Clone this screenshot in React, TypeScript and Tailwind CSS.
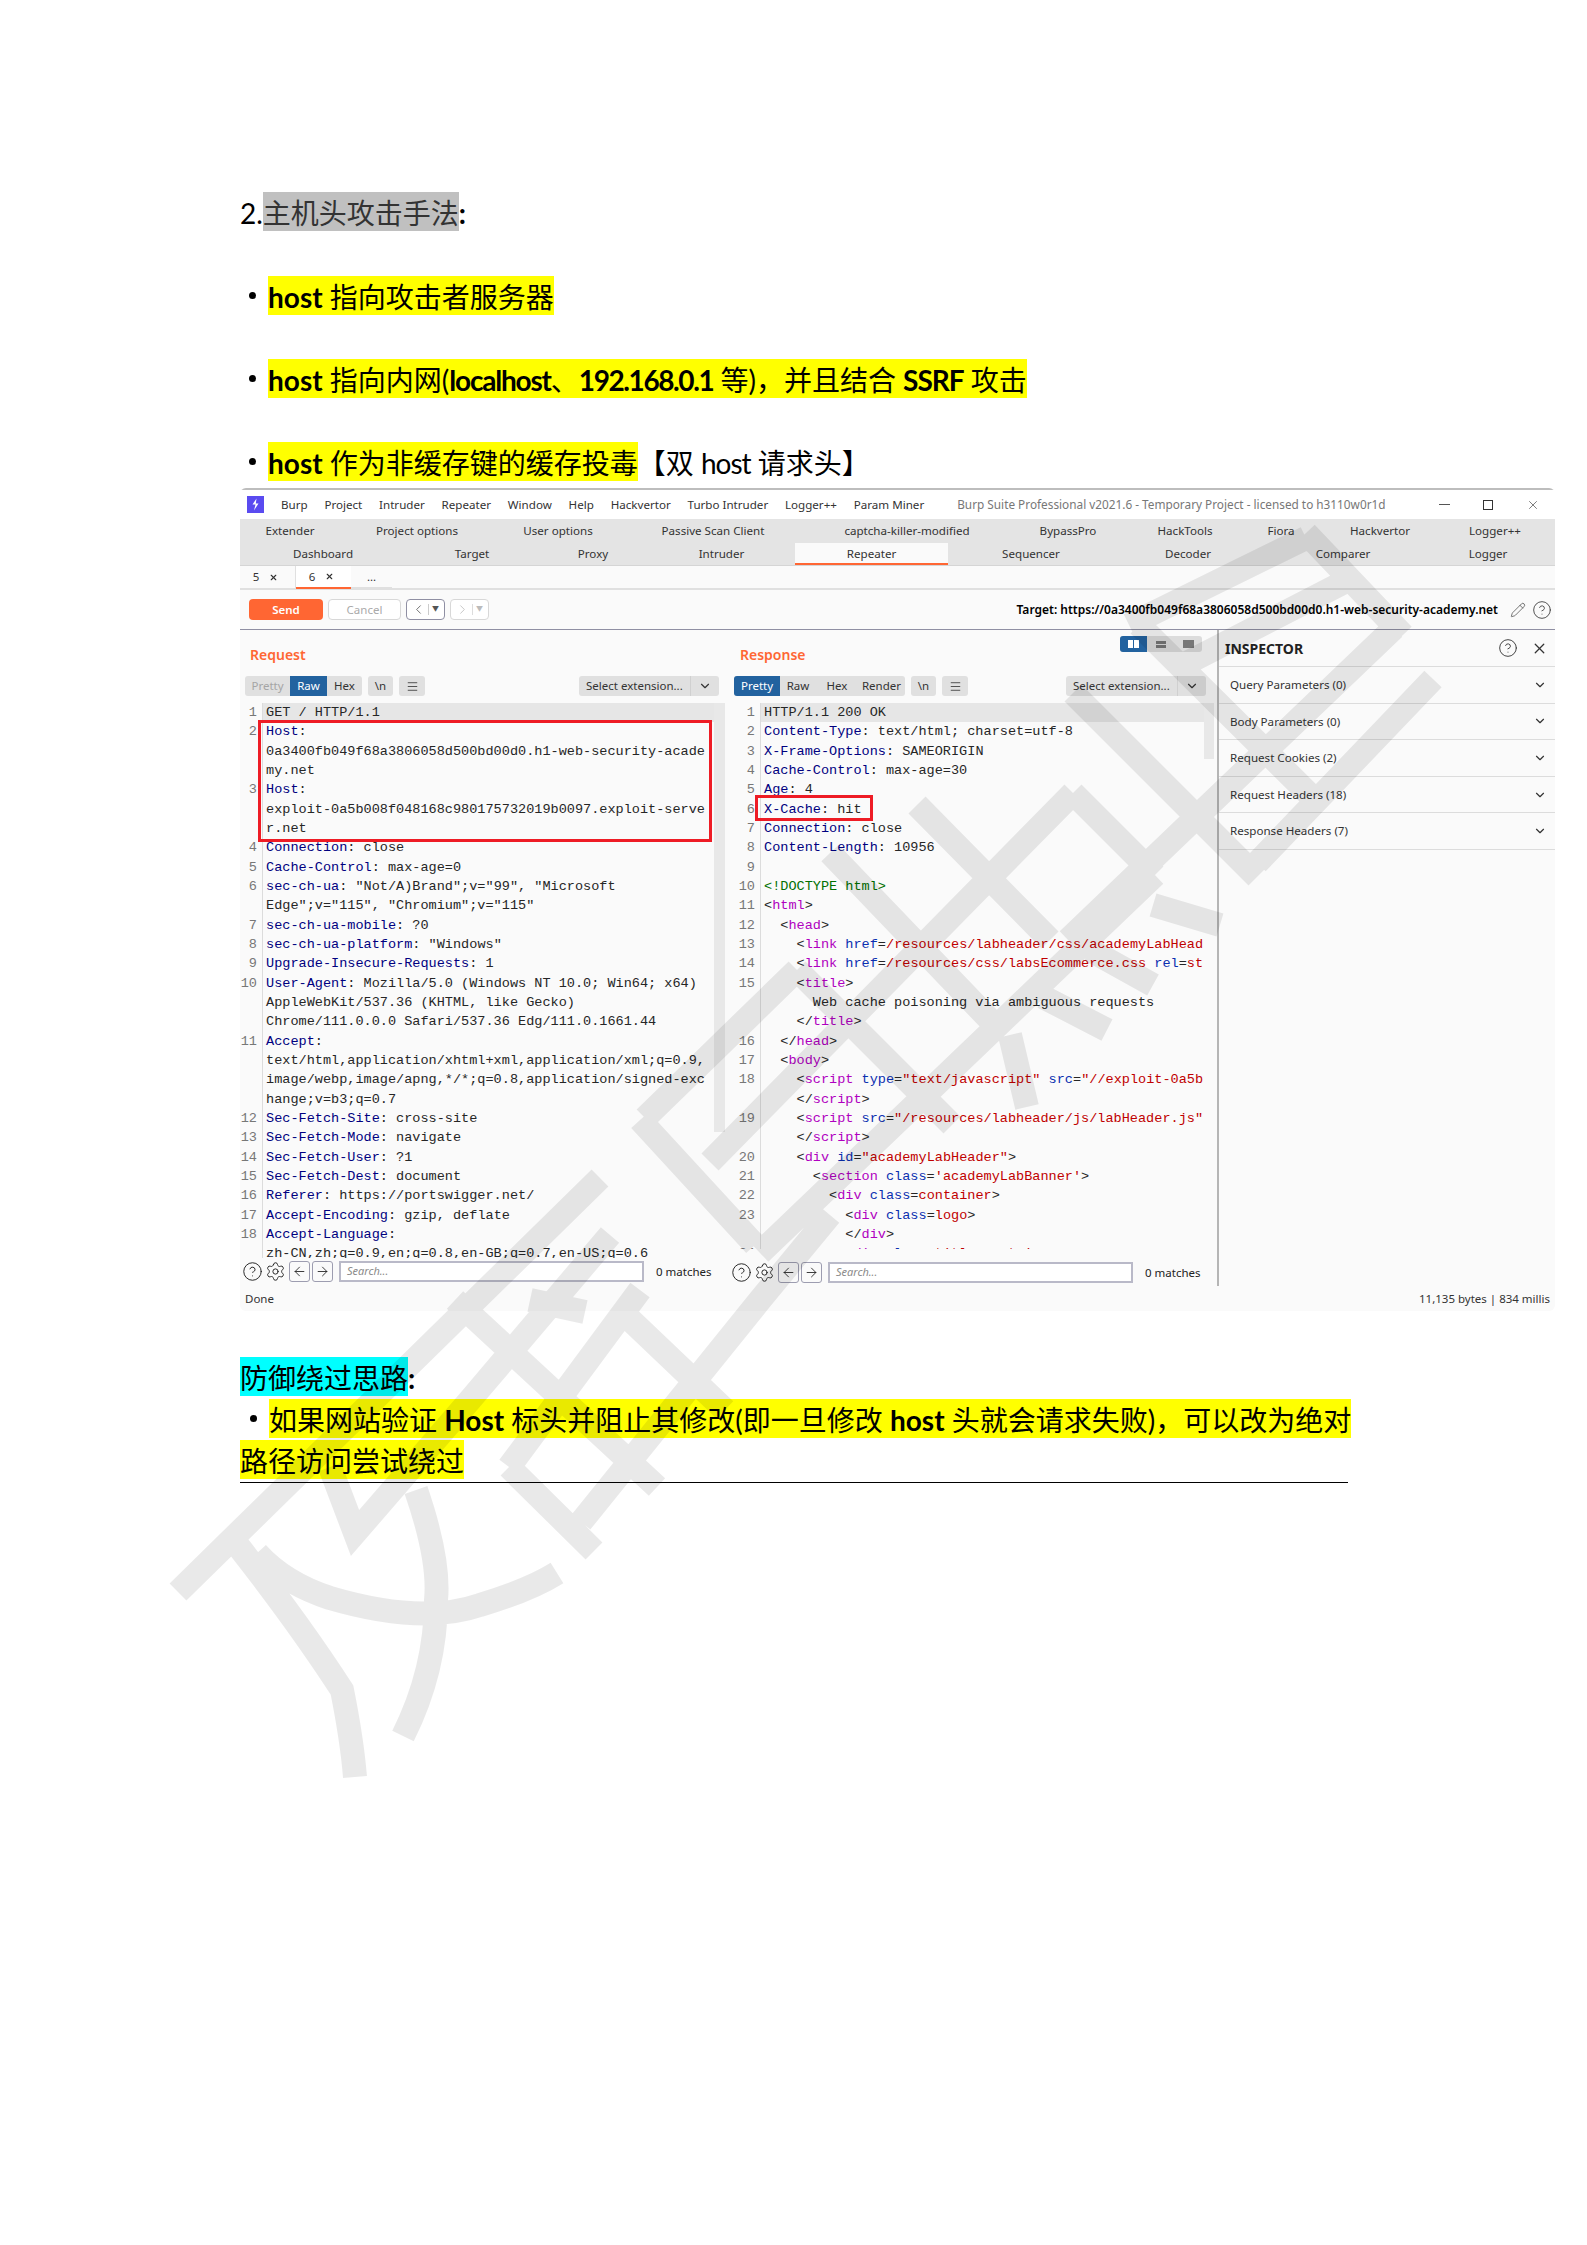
import React from 'react';
import { ArrowLeft, ArrowRight, ChevronDown, ChevronLeft, ChevronRight, CircleHelp, Menu, Pencil, Settings, X } from 'lucide-react';

const tabsTop = [
  ['Extender', 'w-[100px]'], ['Project options', 'w-[154px]'], ['User options', 'w-[128px]'],
  ['Passive Scan Client', 'w-[182px]'], ['captcha-killer-modified', 'w-[206px]'], ['BypassPro', 'w-[116px]'],
  ['HackTools', 'w-[118px]'], ['Fiora', 'w-[74px]'], ['Hackvertor', 'w-[124px]'], ['Logger++', 'w-[106px]'],
];

const tabsBottom = [
  ['Dashboard', 'w-[166px]'], ['Target', 'w-[132px]'], ['Proxy', 'w-[110px]'], ['Intruder', 'w-[147px]'],
  ['Repeater', 'w-[153px]'], ['Sequencer', 'w-[166px]'], ['Decoder', 'w-[148px]'], ['Comparer', 'w-[162px]'], ['Logger', 'w-[128px]'],
];

const menu = ['Burp', 'Project', 'Intruder', 'Repeater', 'Window', 'Help', 'Hackvertor', 'Turbo Intruder', 'Logger++', 'Param Miner'];

// n = header name, t = tag, a = attr, v = value, d = doctype
type Seg = [string, string?];
type Row = { no?: string; segs: Seg[] };

const colors: Record<string, string> = {
  n: 'text-[#000080]',
  t: 'text-[#b000c0]',
  a: 'text-[#0b2fb0]',
  v: 'text-[#c00000]',
  d: 'text-[#007000]',
};

const requestRows: Row[] = [
  { no: '1', segs: [['GET / HTTP/1.1']] },
  { no: '2', segs: [['Host', 'n'], [':']] },
  { segs: [['0a3400fb049f68a3806058d500bd00d0.h1-web-security-acade']] },
  { segs: [['my.net']] },
  { no: '3', segs: [['Host', 'n'], [':']] },
  { segs: [['exploit-0a5b008f048168c980175732019b0097.exploit-serve']] },
  { segs: [['r.net']] },
  { no: '4', segs: [['Connection', 'n'], [': close']] },
  { no: '5', segs: [['Cache-Control', 'n'], [': max-age=0']] },
  { no: '6', segs: [['sec-ch-ua', 'n'], [': "Not/A)Brand";v="99", "Microsoft']] },
  { segs: [['Edge";v="115", "Chromium";v="115"']] },
  { no: '7', segs: [['sec-ch-ua-mobile', 'n'], [': ?0']] },
  { no: '8', segs: [['sec-ch-ua-platform', 'n'], [': "Windows"']] },
  { no: '9', segs: [['Upgrade-Insecure-Requests', 'n'], [': 1']] },
  { no: '10', segs: [['User-Agent', 'n'], [': Mozilla/5.0 (Windows NT 10.0; Win64; x64)']] },
  { segs: [['AppleWebKit/537.36 (KHTML, like Gecko)']] },
  { segs: [['Chrome/111.0.0.0 Safari/537.36 Edg/111.0.1661.44']] },
  { no: '11', segs: [['Accept', 'n'], [':']] },
  { segs: [['text/html,application/xhtml+xml,application/xml;q=0.9,']] },
  { segs: [['image/webp,image/apng,*/*;q=0.8,application/signed-exc']] },
  { segs: [['hange;v=b3;q=0.7']] },
  { no: '12', segs: [['Sec-Fetch-Site', 'n'], [': cross-site']] },
  { no: '13', segs: [['Sec-Fetch-Mode', 'n'], [': navigate']] },
  { no: '14', segs: [['Sec-Fetch-User', 'n'], [': ?1']] },
  { no: '15', segs: [['Sec-Fetch-Dest', 'n'], [': document']] },
  { no: '16', segs: [['Referer', 'n'], [': https://portswigger.net/']] },
  { no: '17', segs: [['Accept-Encoding', 'n'], [': gzip, deflate']] },
  { no: '18', segs: [['Accept-Language', 'n'], [':']] },
  { segs: [['zh-CN,zh;q=0.9,en;q=0.8,en-GB;q=0.7,en-US;q=0.6']] },
];

const responseRows: Row[] = [
  { no: '1', segs: [['HTTP/1.1 200 OK']] },
  { no: '2', segs: [['Content-Type', 'n'], [': text/html; charset=utf-8']] },
  { no: '3', segs: [['X-Frame-Options', 'n'], [': SAMEORIGIN']] },
  { no: '4', segs: [['Cache-Control', 'n'], [': max-age=30']] },
  { no: '5', segs: [['Age', 'n'], [': 4']] },
  { no: '6', segs: [['X-Cache', 'n'], [': hit']] },
  { no: '7', segs: [['Connection', 'n'], [': close']] },
  { no: '8', segs: [['Content-Length', 'n'], [': 10956']] },
  { no: '9', segs: [['']] },
  { no: '10', segs: [['<!DOCTYPE html>', 'd']] },
  { no: '11', segs: [['<'], ['html', 't'], ['>']] },
  { no: '12', segs: [['  <'], ['head', 't'], ['>']] },
  { no: '13', segs: [['    <'], ['link', 't'], [' '], ['href', 'a'], ['='], ['/resources/labheader/css/academyLabHead', 'v']] },
  { no: '14', segs: [['    <'], ['link', 't'], [' '], ['href', 'a'], ['='], ['/resources/css/labsEcommerce.css', 'v'], [' '], ['rel', 'a'], ['='], ['st', 'v']] },
  { no: '15', segs: [['    <'], ['title', 't'], ['>']] },
  { segs: [['      Web cache poisoning via ambiguous requests']] },
  { segs: [['    </'], ['title', 't'], ['>']] },
  { no: '16', segs: [['  </'], ['head', 't'], ['>']] },
  { no: '17', segs: [['  <'], ['body', 't'], ['>']] },
  { no: '18', segs: [['    <'], ['script', 't'], [' '], ['type', 'a'], ['='], ['"text/javascript"', 'v'], [' '], ['src', 'a'], ['='], ['"//exploit-0a5b', 'v']] },
  { segs: [['    </'], ['script', 't'], ['>']] },
  { no: '19', segs: [['    <'], ['script', 't'], [' '], ['src', 'a'], ['='], ['"/resources/labheader/js/labHeader.js"', 'v']] },
  { segs: [['    </'], ['script', 't'], ['>']] },
  { no: '20', segs: [['    <'], ['div', 't'], [' '], ['id', 'a'], ['='], ['"academyLabHeader"', 'v'], ['>']] },
  { no: '21', segs: [['      <'], ['section', 't'], [' '], ['class', 'a'], ['='], ["'academyLabBanner'", 'v'], ['>']] },
  { no: '22', segs: [['        <'], ['div', 't'], [' '], ['class', 'a'], ['='], ['container', 'v'], ['>']] },
  { no: '23', segs: [['          <'], ['div', 't'], [' '], ['class', 'a'], ['='], ['logo', 'v'], ['>']] },
  { segs: [['          </'], ['div', 't'], ['>']] },
  { no: '24', segs: [['          <'], ['div', 't'], [' '], ['class', 'a'], ['='], ['title-container', 'v'], ['>']] },
];

const inspectorRows = ['Query Parameters (0)', 'Body Parameters (0)', 'Request Cookies (2)', 'Request Headers (18)', 'Response Headers (7)'];

function CodeRows({ rows, numClass }: { rows: Row[]; numClass: string }) {
  return (
    <>
      {rows.map((row, i) => (
        <div key={i} className="flex h-[19.33px] leading-[19.33px]">
          <div className={`${numClass} shrink-0 border-r border-[#dcdcdc] pr-[5px] text-right text-[#777]`}>{row.no}</div>
          <div className={`grow whitespace-pre pl-[3px] text-[#262626] ${i === 0 ? 'bg-[#e6e6e6]' : ''}`}>
            {row.segs.map((s, j) => (
              <span key={j} className={s[1] ? colors[s[1]] : ''}>{s[0]}</span>
            ))}
          </div>
        </div>
      ))}
    </>
  );
}

function ViewTabs({ items, active, grayFirst }: { items: [string, string][]; active: string; grayFirst?: boolean }) {
  return (
    <div className="flex h-[20px] overflow-hidden rounded-[3px] bg-[#e0e0e0] text-[11.5px] leading-[20px]">
      {items.map(([label, w]) => (
        <div
          key={label}
          className={`${w} text-center ${label === active ? 'bg-[#22629f] text-white' : grayFirst && label === 'Pretty' ? 'text-[#a5a5a5]' : 'text-[#333]'}`}
        >
          {label}
        </div>
      ))}
    </div>
  );
}

function SmallButtons() {
  return (
    <>
      <div className="flex h-[20px] w-[25px] items-center justify-center rounded-[3px] bg-[#e0e0e0] text-[11.5px] text-[#333]">\n</div>
      <div className="flex h-[20px] w-[26px] items-center justify-center rounded-[3px] bg-[#e0e0e0]">
        <Menu size={13} strokeWidth={1.5} className="text-[#333]" />
      </div>
    </>
  );
}

function SelectExt() {
  return (
    <div className="ml-auto flex h-[20px] w-[140px] items-center rounded-[3px] bg-[#e0e0e0] text-[11.5px] text-[#333]">
      <div className="w-[112px] whitespace-nowrap border-r border-[#d0d0d0] pl-[7px] leading-[20px]">Select extension...</div>
      <ChevronDown size={14} strokeWidth={2} className="ml-[7px]" />
    </div>
  );
}

function SearchBar({ boxWidth, gapLeft }: { boxWidth: string; gapLeft: string }) {
  return (
    <div className={`flex h-[27px] items-center bg-[#fafafa] ${gapLeft} text-[#222]`}>
      <CircleHelp size={21} strokeWidth={1.1} />
      <Settings size={21} strokeWidth={1.1} className="ml-[2px]" />
      <div className="ml-[3px] flex h-[21px] w-[21px] items-center justify-center rounded-[3px] border border-[#9d9db0]">
        <ArrowLeft size={15} strokeWidth={1.4} />
      </div>
      <div className="ml-[2px] flex h-[21px] w-[21px] items-center justify-center rounded-[3px] border border-[#9d9db0]">
        <ArrowRight size={15} strokeWidth={1.4} />
      </div>
      <div className={`${boxWidth} ml-[6px] flex h-[21px] items-center border-2 border-[#b9b9c8] bg-white pl-[6px] text-[11px] italic text-[#8a8a8a]`}>Search...</div>
      <div className="ml-[12px] whitespace-nowrap text-[11.5px]">0 matches</div>
    </div>
  );
}

function Bullet() {
  return (
    <span className="relative w-0">
      <span className="absolute -left-[19px] top-[16px] h-[7px] w-[7px] rounded-full bg-black" />
    </span>
  );
}

function Watermark() {
  const strokes = [
    // left glyph
    'M178 1592 L600 1178',
    'M239 1547 Q300 1625 342 1690 Q352 1740 355 1777',
    'M257 1553 Q284 1583 330 1598 Q422 1625 480 1605 Q530 1590 557 1573',
    'M416 1490 Q440 1560 436 1600 Q436 1670 403 1736',
    'M330 1467 L355 1533 L470 1400 L610 1235',
    // middle glyph
    'M509 1467 L594 1551',
    'M509 1467 L640 1290',
    'M455 1300 L657 1487',
    'M581 1522 L760 1300 L830 1215',
    'M620 1310 L725 1410',
    'M530 1300 L585 1312',
    'M640 1120 L755 1245',
    'M645 1118 L797 970',
    'M797 970 L952 1125',
    'M830 853 L990 1020',
    'M917 805 L1050 940',
    // right glyph
    'M1073 793 L1155 875',
    'M1073 793 L710 1162',
    'M1155 875 L760 1253',
    'M1073 693 L1257 877',
    'M1257 863 L1433 679',
    'M1394 628 L1068 940',
    'M1139 625 L1320 805',
    'M1129 625 L1306 538',
    'M1185 664 L1354 577',
    'M1306 533 L1403 635',
    'M1010 1035 L1027 1107',
    'M1153 905 L1220 925',
    'M1043 997 L1107 1030',
    'M1090 950 L1153 985',
  ];
  return (
    <svg className="pointer-events-none absolute left-0 top-0" width={1587} height={2245} viewBox="0 0 1587 2245">
      <g fill="none" stroke="#000" strokeWidth={24} opacity={0.085}>
        <path d={strokes.join(' ')} />
      </g>
    </svg>
  );
}

export default function App() {
  const docFont = { fontFamily: '"Lato","Noto Sans CJK SC",sans-serif' };
  return (
    <div className="relative h-[2245px] w-[1587px] overflow-hidden bg-white pl-[240px] pt-[192px] text-[28px] leading-[42px] text-black" style={docFont}>
      <div className="flex h-[39px]">
        <span>2.</span>
        <span className="w-[196px] bg-[#c0c0c0] text-[#333]">主机头攻击手法</span>
        <span className="font-bold">:</span>
      </div>
      <div className="mt-[45px] flex h-[39px] pl-[28px]">
        <Bullet />
        <span className="bg-[#ffff00]"><b>host</b> 指向攻击者服务器</span>
      </div>
      <div className="mt-[44px] flex h-[39px] pl-[28px]">
        <Bullet />
        <span className="bg-[#ffff00]">
          <b>host</b> 指向内网(<b className="tracking-[-1.2px]">localhost</b>、<b className="tracking-[-1.4px]">192.168.0.1</b> 等)，并且结合 <b className="tracking-[-1px]">SSRF</b> 攻击
        </span>
      </div>
      <div className="mt-[44px] flex h-[39px] pl-[28px]">
        <Bullet />
        <span className="bg-[#ffff00]"><b>host</b> 作为非缓存键的缓存投毒</span>
        <span>【双 <span className="tracking-[-1px]">host</span> 请求头】</span>
      </div>

      <div className="mt-[7px] flex h-[823px] w-[1315px] flex-col rounded-[6px] border-t-2 border-[#bdbdbd] bg-[#fafafa] text-[12px] leading-normal text-[#333]" style={{ fontFamily: '"Noto Sans","Noto Sans CJK SC",sans-serif' }}>
        {/* title bar */}
        <div className="flex h-[29px] items-center bg-white pl-[7px]">
          <svg width="17" height="17" viewBox="0 0 17 17">
            <rect width="17" height="17" fill="#5a4bf0" />
            <path d="M9.5 2.5 L5.5 8.5 L8.5 8.5 L7 14.5 L11.5 7.5 L8.8 7.5 Z" fill="#fff" />
          </svg>
          <div className="ml-[17px] flex gap-[16.8px] whitespace-nowrap text-[11.6px]">
            {menu.map((m) => <span key={m}>{m}</span>)}
          </div>
          <div className="ml-[33px] whitespace-nowrap text-[11.8px] text-[#777]">Burp Suite Professional v2021.6 - Temporary Project - licensed to h3110w0r1d</div>
          <div className="ml-auto mr-[15px] flex items-center gap-[33px] text-[#333]">
            <div className="h-px w-[11px] bg-[#555]" />
            <div className="h-[10px] w-[10px] border border-[#333]" />
            <X size={14} strokeWidth={1.1} />
          </div>
        </div>
        {/* burp tabs */}
        <div className="bg-[#e4e4e4] text-[11.6px]">
          <div className="flex h-[24px] items-center whitespace-nowrap">
            {tabsTop.map(([t, w]) => <div key={t} className={`${w} text-center`}>{t}</div>)}
          </div>
          <div className="flex h-[23px] items-stretch whitespace-nowrap border-b border-[#d5d5d5]">
            {tabsBottom.map(([t, w]) => (
              <div key={t} className={`${w} text-center leading-[21px] ${t === 'Repeater' ? 'border-b-2 border-[#ff6633] bg-[#fafafa]' : ''}`}>{t}</div>
            ))}
          </div>
        </div>
        {/* repeater sub tabs */}
        <div className="flex h-[24px] border-b-2 border-[#e0e0e0] text-[11.5px]">
          <div className="flex h-[22px] w-[56px] items-center justify-center gap-[10px] border-r border-[#e0e0e0] bg-[#fafafa] pr-[4px]"><span>5</span><X size={9} strokeWidth={3} /></div>
          <div className="flex h-[23px] w-[55px] items-center justify-center gap-[10px] border-b-2 border-[#ff6633] bg-white pr-[4px]"><span>6</span><X size={9} strokeWidth={3} /></div>
          <div className="flex h-[22px] w-[41px] items-center justify-center border-b border-[#e0e0e0]">...</div>
        </div>
        {/* toolbar */}
        <div className="flex h-[40px] shrink-0 items-center border-b border-[#8f8fa3] pl-[9px] pr-[3px]">
          <div className="flex h-[21px] w-[74px] items-center justify-center rounded-[4px] bg-[#ff6633] text-[11.5px] font-semibold text-white">Send</div>
          <div className="ml-[5px] flex h-[21px] w-[73px] items-center justify-center rounded-[4px] border border-[#d8d8d8] bg-white text-[11.5px] text-[#aaa]">Cancel</div>
          <div className="ml-[5px] flex h-[21px] w-[39px] items-center rounded-[4px] border border-[#8f8fa3] bg-white pl-[4px] text-[#555]">
            <ChevronLeft size={15} strokeWidth={1.3} />
            <span className="ml-[2px] border-l border-[#ccc] pl-[3px] text-[7px]">▼</span>
          </div>
          <div className="ml-[5px] flex h-[21px] w-[39px] items-center rounded-[4px] border border-[#d8d8d8] bg-white pl-[4px] text-[#bbb]">
            <ChevronRight size={15} strokeWidth={1.3} />
            <span className="ml-[2px] border-l border-[#ddd] pl-[3px] text-[7px]">▼</span>
          </div>
          <div className="ml-auto whitespace-nowrap text-[12px] font-semibold text-black">Target: https://0a3400fb049f68a3806058d500bd00d0.h1-web-security-academy.net</div>
          <Pencil size={16} strokeWidth={1} className="ml-[12px]" />
          <CircleHelp size={20} strokeWidth={1} className="ml-[6px]" />
        </div>
        {/* panels */}
        <div className="flex h-[656px] shrink-0">
          {/* request */}
          <div className="flex w-[490px] shrink-0 flex-col">
            <div className="h-[46px] pl-[10px] pt-[16px] text-[14px] font-semibold leading-[18px] text-[#ff6633]">Request</div>
            <div className="flex h-[20px] items-center gap-[6px] pl-[5px] pr-[11px]">
              <ViewTabs items={[['Pretty', 'w-[45px]'], ['Raw', 'w-[37px]'], ['Hex', 'w-[35px]']]} active="Raw" grayFirst />
              <SmallButtons />
              <SelectExt />
            </div>
            <div className="relative mt-[7px] flex h-[555px] overflow-hidden text-[13.55px]" style={{ fontFamily: '"Liberation Mono",monospace' }}>
              <div className="w-[474px]">
                <CodeRows rows={requestRows} numClass="w-[23px]" />
              </div>
              <div className="h-[429px] w-[11px] bg-[#e8e8e8]" />
              <div className="absolute left-[18px] top-[17px] h-[122px] w-[454px] border-[3px] border-[#ee1c25]" />
            </div>
            <SearchBar boxWidth="w-[305px]" gapLeft="pl-[2px]" />
          </div>
          {/* response */}
          <div className="flex w-[489px] shrink-0 flex-col border-r-2 border-[#b5b5b5]">
            <div className="flex h-[46px] justify-between pl-[10px] pr-[15px]">
              <div className="pt-[16px] text-[14px] font-semibold leading-[18px] text-[#ff6633]">Response</div>
              <div className="mt-[6px] flex h-[16px] w-[82px] overflow-hidden rounded-[3px] bg-[#dcdcdc]">
                <div className="flex w-[27px] items-center justify-center gap-[1px] bg-[#22629f]">
                  <div className="h-[8px] w-[5px] bg-white" />
                  <div className="h-[8px] w-[5px] bg-white" />
                </div>
                <div className="flex w-[28px] flex-col items-center justify-center gap-[1px]">
                  <div className="h-[3px] w-[10px] bg-[#777]" />
                  <div className="h-[3px] w-[10px] bg-[#777]" />
                </div>
                <div className="flex w-[27px] items-center justify-center">
                  <div className="h-[8px] w-[11px] bg-[#777]" />
                </div>
              </div>
            </div>
            <div className="flex h-[20px] items-center gap-[6px] pl-[4px] pr-[11px]">
              <ViewTabs items={[['Pretty', 'w-[46px]'], ['Raw', 'w-[36px]'], ['Hex', 'w-[42px]'], ['Render', 'w-[47px]']]} active="Pretty" />
              <SmallButtons />
              <SelectExt />
            </div>
            <div className="relative mt-[7px] flex h-[546px] overflow-hidden text-[13.55px]" style={{ fontFamily: '"Liberation Mono",monospace' }}>
              <div className="w-[474px]">
                <CodeRows rows={responseRows} numClass="w-[31px]" />
              </div>
              <div className="h-[56px] w-[10px] bg-[#e8e8e8]" />
              <div className="absolute left-[25px] top-[92px] h-[26px] w-[118px] border-[3px] border-[#ee1c25]" />
            </div>
            <div className="mt-auto">
              <SearchBar boxWidth="w-[305px]" gapLeft="pl-[1px]" />
            </div>
          </div>
          {/* inspector */}
          <div className="grow">
            <div className="flex h-[36px] items-center pl-[6px] pr-[6px]">
              <span className="text-[14px] font-bold text-[#222]">INSPECTOR</span>
              <CircleHelp size={20} strokeWidth={1.1} className="ml-auto" />
              <X size={17} strokeWidth={1.8} className="ml-[13px] mr-[1px]" />
            </div>
            {inspectorRows.map((r) => (
              <div key={r} className="flex h-[36.6px] items-center border-t border-[#dcdcdc] pl-[11px] pr-[8px] text-[11.6px]">
                {r}
                <ChevronDown size={14} strokeWidth={2} className="ml-auto" />
              </div>
            ))}
            <div className="border-t border-[#dcdcdc]" />
          </div>
        </div>
        <div className="flex grow items-center justify-between pl-[5px] pr-[5px] text-[11.5px]">
          <span>Done</span>
          <span>11,135 bytes | 834 millis</span>
        </div>
      </div>

      <div className="mt-[46px] flex h-[39px]">
        <span className="bg-[#00ffff]">防御绕过思路</span>
        <span className="font-bold">:</span>
      </div>
      <div className="mt-[3px] flex h-[39px] whitespace-nowrap pl-[29px]">
        <Bullet />
        <span className="bg-[#ffff00]">如果网站验证 <b>Host</b> 标头并阻止其修改(即一旦修改 <b>host</b> 头就会请求失败)，可以改为绝对</span>
      </div>
      <div className="mt-[2px] flex h-[39px]">
        <span className="bg-[#ffff00]">路径访问尝试绕过</span>
      </div>
      <div className="mt-[3px] h-px w-[1108px] bg-black" />
      <Watermark />
    </div>
  );
}
